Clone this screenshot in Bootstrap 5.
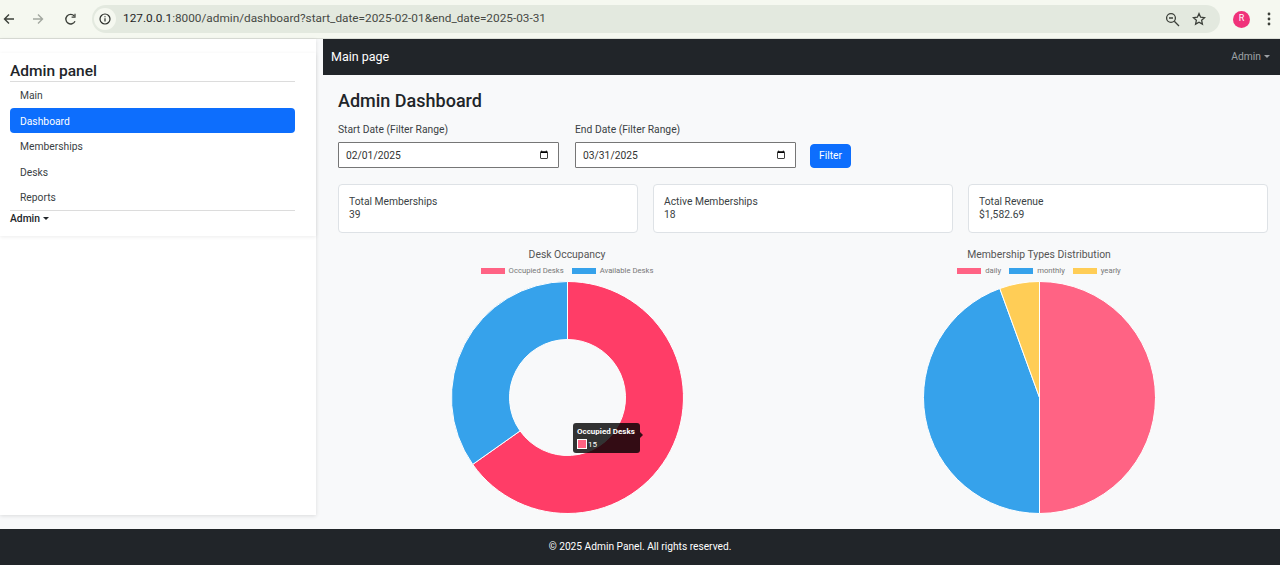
<!DOCTYPE html>
<html lang="en">
<head>
    <meta charset="UTF-8">
    <meta name="viewport" content="width=device-width, initial-scale=1.0">
    <title>Admin Dashboard</title>
    <link href="https://cdn.jsdelivr.net/npm/bootstrap@5.3.0/dist/css/bootstrap.min.css" rel="stylesheet">
    <style>
        body {
            font-family: Roboto, "Noto Sans", sans-serif;
            font-size: 10.3px;
            background-color: #f8f9fa;
            height: 565px;
            overflow: hidden;
        }
        .browser-bar {
            height: 39px;
            background-color: #f5f8f0;
            border-bottom: 1px solid #dcdfd8;
        }
        .omnibox {
            width: 1128px;
            height: 28px;
            margin-left: 15px;
            padding-left: 2px;
            background-color: #e3e9df;
            border-radius: 14px;
            font-size: 11.8px;
            color: #1f1f1f;
        }
        .omnibox-info {
            width: 22px;
            height: 22px;
            margin-right: 7px;
            background-color: #f5f8f0;
            border-radius: 50%;
        }
        .url-rest { color: #474a45; }
        .avatar-dot {
            width: 17px;
            height: 17px;
            background-color: #f0327a;
            color: #fff;
            font-size: 9px;
            border-radius: 50%;
            margin-left: 13px;
        }
        .side-wrap {
            width: 316px;
            height: 476px;
            margin-right: 7px;
            background-color: #fff;
            box-shadow: 0 1px 4px rgba(0, 0, 0, .12);
        }
        .side-panel {
            height: 183px;
            margin-top: 14px;
            padding: 8px 21px 0 10px;
            box-shadow: 0 1px 4px rgba(0, 0, 0, .08);
        }
        .side-title {
            font-size: 15.5px;
            font-weight: 500;
            line-height: 20px;
            margin: 0;
            border-bottom: 1px solid #dcdcdc;
            color: #212529;
        }
        .side-link {
            display: block;
            height: 25.6px;
            line-height: 25.6px;
            padding: 1px 0 0 10px;
            border-radius: 4px;
            color: #3a3f44;
            text-decoration: none;
        }
        .side-link.active {
            background-color: #0d6efd;
            color: #fff;
        }
        .side-foot {
            border-top: 1px solid #dcdcdc;
            line-height: 15px;
            font-weight: 500;
            color: #212529;
        }
        .caret-down {
            display: inline-block;
            width: 0;
            height: 0;
            margin-left: 3px;
            vertical-align: 2px;
            border-top: 3px solid currentColor;
            border-left: 3px solid transparent;
            border-right: 3px solid transparent;
        }
        .top-dark {
            height: 36px;
            background-color: #212529;
            padding: 0 10px 0 8px;
        }
        .top-brand {
            font-size: 12.5px;
            color: #fff;
        }
        .top-user {
            color: #9da1a5;
        }
        .main-body {
            padding: 15px 12px 0 15px;
        }
        .page-title {
            font-size: 18px;
            font-weight: 500;
            line-height: 22px;
            margin: 0 0 11px;
            color: #212529;
        }
        .filter-cell { width: 221px; }
        .filter-label {
            display: block;
            line-height: 14px;
            margin-bottom: 5px;
            color: #3a3f44;
        }
        .filter-input {
            height: 26px;
            min-height: 26px;
            padding: 1px 7px 0;
            font-size: 10.3px;
            color: #333;
            border: 1px solid #767676;
            border-radius: 1px;
            background-color: #fff;
        }
        .filter-btn {
            font-size: 10.3px;
            padding: 0;
            width: 41px;
            height: 24px;
            border-radius: 4px;
        }
        .stat-box {
            height: 49px;
            padding: 10px 10px;
            background-color: #fff;
            border: 1px solid #dee2e6;
            border-radius: 4px;
            line-height: 13px;
            color: #3a3f44;
            flex: 1 1 0;
        }
        .chart-cell {
            flex: 1 1 0;
            position: relative;
            text-align: center;
        }
        .chart-title {
            font-size: 10.4px;
            line-height: 14px;
            color: #555;
        }
        .chart-legend {
            height: 14px;
            font-size: 7.7px;
            line-height: 14px;
            color: #777;
            margin-top: 2px;
            margin-bottom: 3px;
        }
        .legend-swatch {
            display: inline-block;
            width: 24px;
            height: 6px;
        }
        .chart-tip {
            position: absolute;
            left: 235px;
            top: 175px;
            width: 67px;
            height: 30px;
            padding: 3px 4px;
            background-color: rgba(0, 0, 0, .8);
            border-radius: 3px;
            color: #fff;
            font-size: 8px;
            line-height: 11px;
            text-align: left;
            white-space: nowrap;
        }
        .chart-tip::after {
            content: "";
            position: absolute;
            left: 100%;
            top: 9px;
            border: 3px solid transparent;
            border-left-color: rgba(0, 0, 0, .8);
        }
        .tip-swatch {
            display: inline-block;
            width: 10px;
            height: 10px;
            margin-right: 1px;
            background-color: #ff6384;
            border: 1px solid #fff;
            vertical-align: -2px;
        }
        .foot-dark {
            height: 36px;
            margin-top: auto;
            background-color: #212529;
            color: #fff;
            font-size: 10.2px;
        }
    </style>
</head>
<body>
    <div class="d-flex flex-column" style="height: 565px">

        <!-- Browser toolbar -->
        <div class="browser-bar d-flex align-items-center flex-shrink-0">
            <svg style="margin-left: 3px" width="12" height="12" viewBox="0 0 12 12" fill="none" stroke="#3c403a" stroke-width="1.4"><path d="M11 6H1.5M6 1.5 1.5 6 6 10.5"/></svg>
            <svg style="margin-left: 17px" width="12" height="12" viewBox="0 0 12 12" fill="none" stroke="#a3a8a0" stroke-width="1.4"><path d="M1 6h9.5M6 1.5 10.5 6 6 10.5"/></svg>
            <svg style="margin-left: 20px" width="13" height="13" viewBox="0 0 13 13" fill="none" stroke="#3c403a" stroke-width="1.4"><path d="M11 8.2A4.8 4.8 0 1 1 10.3 3"/><path d="M11 .8v3.4H7.6" stroke-width="1.2"/></svg>
            <div class="omnibox d-flex align-items-center">
                <span class="omnibox-info d-flex align-items-center justify-content-center">
                    <svg width="12" height="12" viewBox="0 0 12 12" fill="none" stroke="#2c2f2b" stroke-width="1.2"><circle cx="6" cy="6" r="5"/><path d="M6 5.2v3.4M6 3.2v1"/></svg>
                </span>
                <span>127.0.0.1<span class="url-rest">:8000/admin/dashboard?start_date=2025-02-01&amp;end_date=2025-03-31</span></span>
                <svg class="ms-auto" width="15" height="15" viewBox="0 0 15 15" fill="none" stroke="#3c403a" stroke-width="1.3"><circle cx="6" cy="6" r="4.4"/><path d="M9.3 9.3 14 14M4 6h4"/></svg>
                <svg style="margin: 0 14px 0 12px" width="14" height="14" viewBox="0 0 24 24" fill="none" stroke="#3c403a" stroke-width="2.2"><path d="M12 2.8l2.8 6.2 6.7.7-5 4.5 1.4 6.6-5.9-3.4-5.9 3.4 1.4-6.6-5-4.5 6.7-.7z"/></svg>
            </div>
            <span class="avatar-dot d-flex align-items-center justify-content-center">R</span>
            <svg style="margin-left: 17px" width="4" height="14" viewBox="0 0 4 14" fill="#3c403a"><circle cx="2" cy="2" r="1.4"/><circle cx="2" cy="7" r="1.4"/><circle cx="2" cy="12" r="1.4"/></svg>
        </div>

        <div class="d-flex flex-grow-1">
            <!-- Sidebar -->
            <aside class="side-wrap flex-shrink-0">
                <div class="side-panel">
                    <h5 class="side-title">Admin panel</h5>
                    <nav>
                        <a class="side-link" href="#">Main</a>
                        <a class="side-link active" href="#">Dashboard</a>
                        <a class="side-link" href="#">Memberships</a>
                        <a class="side-link" href="#">Desks</a>
                        <a class="side-link" href="#">Reports</a>
                    </nav>
                    <div class="side-foot">Admin<span class="caret-down"></span></div>
                </div>
            </aside>

            <div class="flex-grow-1">
                <!-- Dark header -->
                <div class="top-dark d-flex align-items-center justify-content-between">
                    <span class="top-brand">Main page</span>
                    <span class="top-user">Admin<span class="caret-down"></span></span>
                </div>

                <div class="main-body">
                    <h3 class="page-title">Admin Dashboard</h3>

                    <form class="d-flex align-items-end mb-3">
                        <div class="filter-cell me-3">
                            <label class="filter-label" for="startDate">Start Date (Filter Range)</label>
                            <input type="date" class="form-control filter-input" id="startDate" value="2025-02-01">
                        </div>
                        <div class="filter-cell" style="margin-right: 14px">
                            <label class="filter-label" for="endDate">End Date (Filter Range)</label>
                            <input type="date" class="form-control filter-input" id="endDate" value="2025-03-31">
                        </div>
                        <button type="button" class="btn btn-primary filter-btn">Filter</button>
                    </form>

                    <div class="d-flex" style="gap: 15px; margin-bottom: 15px">
                        <div class="stat-box">Total Memberships<br>39</div>
                        <div class="stat-box">Active Memberships<br>18</div>
                        <div class="stat-box">Total Revenue<br>$1,582.69</div>
                    </div>

                    <div class="d-flex" style="gap: 14px">
                        <div class="chart-cell">
                            <div class="chart-title">Desk Occupancy</div>
                            <div class="chart-legend d-flex justify-content-center align-items-center gap-1">
                                <span class="legend-swatch" style="background-color: #ff6384"></span><span>Occupied Desks</span>
                                <span class="legend-swatch ms-1" style="background-color: #36a2eb"></span><span>Available Desks</span>
                            </div>
                            <svg width="233" height="233" viewBox="-116.5 -116.5 233 233">
                                <path d="M0-116A116 116 0 1 1-94.8 66.9L-47.4 33.4A58 58 0 1 0 0-58Z" fill="#ff3d67" stroke="#fff" stroke-width="1"/>
                                <path d="M-94.8 66.9A116 116 0 0 1 0-116V-58A58 58 0 0 0-47.4 33.4Z" fill="#36a2eb" stroke="#fff" stroke-width="1"/>
                            </svg>
                            <div class="chart-tip">
                                <div class="fw-bold">Occupied Desks</div>
                                <div style="margin-top: 2px"><span class="tip-swatch"></span>15</div>
                            </div>
                        </div>
                        <div class="chart-cell">
                            <div class="chart-title">Membership Types Distribution</div>
                            <div class="chart-legend d-flex justify-content-center align-items-center gap-1">
                                <span class="legend-swatch" style="background-color: #ff6384"></span><span>daily</span>
                                <span class="legend-swatch ms-1" style="background-color: #36a2eb"></span><span>monthly</span>
                                <span class="legend-swatch ms-1" style="background-color: #ffcd56"></span><span>yearly</span>
                            </div>
                            <svg width="233" height="233" viewBox="-116.5 -116.5 233 233">
                                <path d="M0 0V-116A116 116 0 0 1 0 116Z" fill="#ff6384" stroke="#fff" stroke-width="1"/>
                                <path d="M0 0V116A116 116 0 0 1-39.7-109Z" fill="#36a2eb" stroke="#fff" stroke-width="1"/>
                                <path d="M0 0-39.7-109A116 116 0 0 1 0-116Z" fill="#ffcd56" stroke="#fff" stroke-width="1"/>
                            </svg>
                        </div>
                    </div>
                </div>
            </div>
        </div>

        <!-- Footer -->
        <footer class="foot-dark d-flex align-items-center justify-content-center flex-shrink-0">© 2025 Admin Panel. All rights reserved.</footer>
    </div>

    <script src="https://cdn.jsdelivr.net/npm/bootstrap@5.3.0/dist/js/bootstrap.bundle.min.js"></script>
</body>
</html>
